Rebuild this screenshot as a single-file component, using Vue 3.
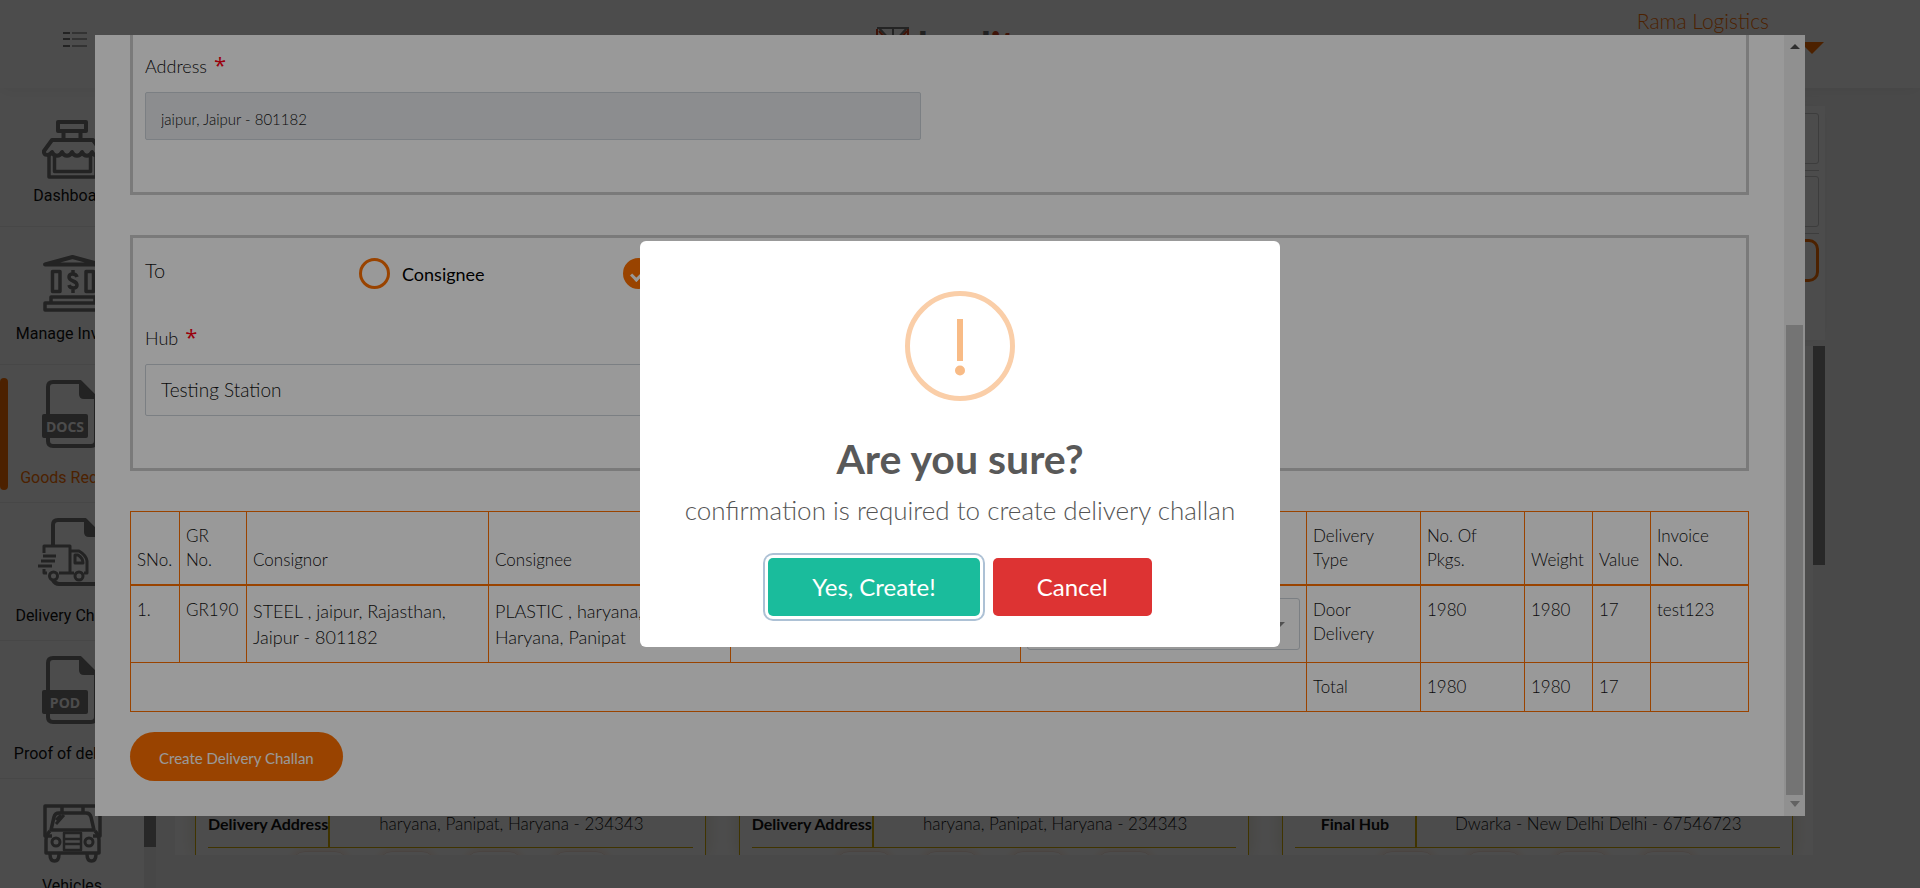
<script setup>
import { ref } from 'vue'

const menu = [
  { label: 'Dashboard', icon: 'shop' },
  { label: 'Manage Invoice', icon: 'bank' },
  { label: 'Goods Receipt', icon: 'docs', active: true, tall: true },
  { label: 'Delivery Challan', icon: 'truck', tall: true },
  { label: 'Proof of delivery', icon: 'pod', tall: true },
  { label: 'Vehicles', icon: 'vehicle' }
]

const cards = [
  { name: 'Delivery Address', value: 'haryana, Panipat, Haryana - 234343' },
  { name: 'Delivery Address', value: 'haryana, Panipat, Haryana - 234343' },
  { name: 'Final Hub', value: 'Dwarka - New Delhi Delhi - 67546723' }
]

const destination = ref('hub')
</script>

<template>
  <div class="page">
    <header class="topbar">
      <button class="toggle" aria-label="Toggle menu">
        <svg width="24" height="16" viewBox="0 0 24 16">
          <path d="M0 1h7M0 7h7M0 14h7" stroke="#777" stroke-width="2" />
          <path d="M9 1h15M9 7h15M9 14h15" stroke="#aaa" stroke-width="2" />
        </svg>
      </button>
      <div class="logo">
        <svg width="34" height="34" viewBox="0 0 34 34" fill="none" stroke-width="3">
          <path d="M1 2h32M17 2v30M3 2l11 12M31 2L20 14" stroke="#7a7a7a" stroke-width="2" />
          <path d="M1 3v29h31V3M3 5l9 10M31 5l-9 10" stroke="#d2451e" stroke-width="2" />
        </svg>
        <span>load<b>it</b></span>
      </div>
      <div class="account">
        <span>Rama Logistics</span>
        <svg class="drop" width="24" height="12" viewBox="0 0 24 12"><path d="M0 0h24L12 12z" fill="#ff7100" /></svg>
      </div>
    </header>

    <div class="body">
      <nav class="sidebar">
        <a v-for="item in menu" :key="item.label" href="#" class="item" :class="{ active: item.active, tall: item.tall }">
          <svg class="glyph" viewBox="22 0 100 92" fill="none" stroke="#757575" stroke-width="4" stroke-linejoin="round">
            <template v-if="item.icon === 'shop'">
              <path d="M58 33h28v9H58zM63.500 43v6M80.500 43v6" />
              <path d="M52 51h41l8 11c0 5-7 6-9 1-2 5-8 5-10 0-2 5-8 5-10 0-2 5-8 5-10 0-2 5-8 5-10 0-2 4-9 4-8-1z" />
              <path d="M49 66v22h47V66M54.500 66v16.500h36V66" stroke-width="3.500" />
            </template>
            <template v-else-if="item.icon === 'bank'">
              <path d="M45 37.500h55L72.500 30z" />
              <path d="M52.500 44.500h7.500v20h-7.500zM86 44.500h7.500v20H86z" stroke-width="3.500" />
              <path d="M77 50c-1-4-8-4-8 0 0 5 8 3 8 8 0 4-7 4-8 0M73 43v4M73 61v5" stroke-width="3.500" />
              <path d="M51 76v-6h44v6M45 76h56v7H45z" stroke-width="3.500" />
            </template>
            <template v-else-if="item.icon === 'docs' || item.icon === 'pod'">
              <path d="M80 17H53q-5 0-5 5v54q0 5 5 5h38q5 0 5-5V33z" />
              <path d="M80 16v13q0 4 4 4h12z" fill="#757575" stroke-width="2" />
              <rect x="43" y="50" width="44" height="22" rx="1" fill="#757575" stroke-width="2" />
              <text x="65" y="66.500" class="badge">{{ item.icon.toUpperCase() }}</text>
            </template>
            <template v-else-if="item.icon === 'truck'">
              <path d="M53 42V22q0-5 5-5h27l16 16v43q0 5-5 5H59q-4 0-6-4" />
              <path d="M85 16v13q0 4 4 4h12z" fill="#757575" stroke-width="2" />
              <path d="M44 50v-7h26v27H59M44 66v4h3M70 48h9q7 4 8 10v12h-3M70 70h4M38 63h14M41 58h14M43 53h13" stroke-width="3" />
              <path d="M75 52h3q5 3 5 8h-8z" stroke-width="3" />
              <circle cx="53.500" cy="73" r="4" stroke-width="3" />
              <circle cx="79" cy="73" r="4" stroke-width="3" />
            </template>
            <template v-else>
              <path d="M52 57h-7V27h55v30h-7M62 28v5M83 28v5" stroke-width="3.500" />
              <path d="M51 51l3-13q1-4 5-4h27q4 0 5 4l3 13z" stroke-width="3.500" />
              <path d="M50 52q-4 4-4 9v13h53V61q0-5-4-9" stroke-width="3.500" />
              <path d="M56 45l8-9M56 41l5-5" stroke-width="3" />
              <circle cx="56" cy="63" r="4" stroke-width="3" />
              <circle cx="89" cy="63" r="4" stroke-width="3" />
              <path d="M64 54h17v17H64zM64 60h17M64 65h17" stroke-width="2.500" />
              <path d="M50 75q0 7 4.500 7t4.500-7M87 75q0 7 4.500 7t4.500-7" stroke-width="3.500" />
            </template>
          </svg>
          <span>{{ item.label }}</span>
        </a>
      </nav>
      <div class="rail"><div class="rail-thumb side-thumb"></div></div>

      <main class="main">
        <section class="filters">
          <div class="filter-row"><input class="field" aria-label="Search" /></div>
          <div class="filter-row"><input class="field" aria-label="Filter" /></div>
          <button class="apply" aria-label="Apply"></button>
        </section>
        <section class="listing">
          <div class="cards">
            <article v-for="(card, i) in cards" :key="i" class="card">
              <div class="card-row">
                <strong>{{ card.name }}</strong>
                <span>{{ card.value }}</span>
              </div>
              <div class="chips"><i v-for="n in 4" :key="n"></i></div>
            </article>
          </div>
          <div class="rail list-rail"><div class="rail-thumb list-thumb"></div></div>
        </section>
      </main>
    </div>
  </div>

  <div class="shade dim">
    <div class="dialog">
      <form class="sheet" @submit.prevent>
        <section class="box box-from">
          <label for="address" class="caption">Address <em>*</em></label>
          <input id="address" class="control locked" value="jaipur, Jaipur - 801182" readonly />
        </section>

        <section class="box box-to">
          <div class="choices">
            <span class="to">To</span>
            <label class="choice"><input v-model="destination" type="radio" name="destination" value="consignee" /><span>Consignee</span></label>
            <label class="choice"><input v-model="destination" type="radio" name="destination" value="hub" /><span>Hub</span></label>
          </div>
          <label for="hub" class="caption">Hub <em>*</em></label>
          <select id="hub" class="control"><option>Testing Station</option></select>
        </section>

        <table class="grid">
          <colgroup>
            <col class="c-sno" /><col class="c-gr" /><col class="c-party" /><col class="c-party" /><col class="c-wide" /><col />
            <col class="c-type" /><col class="c-pkgs" /><col class="c-weight" /><col class="c-value" /><col class="c-invoice" />
          </colgroup>
          <thead>
            <tr>
              <th>SNo.</th><th>GR<br />No.</th><th>Consignor</th><th>Consignee</th><th></th><th></th>
              <th>Delivery<br />Type</th><th>No. Of<br />Pkgs.</th><th>Weight</th><th>Value</th><th>Invoice<br />No.</th>
            </tr>
          </thead>
          <tbody>
            <tr>
              <td>1.</td>
              <td>GR190</td>
              <td class="party">STEEL , jaipur, Rajasthan,<br />Jaipur - 801182</td>
              <td class="party">PLASTIC , haryana,<br />Haryana, Panipat</td>
              <td></td>
              <td><div class="pick"><select aria-label="Option"><option></option></select></div></td>
              <td>Door<br />Delivery</td>
              <td>1980</td>
              <td>1980</td>
              <td>17</td>
              <td>test123</td>
            </tr>
            <tr>
              <td colspan="6"></td>
              <td>Total</td>
              <td>1980</td>
              <td>1980</td>
              <td>17</td>
              <td></td>
            </tr>
          </tbody>
        </table>

        <button class="create" type="submit">Create Delivery Challan</button>
      </form>
      <div class="scroll">
        <svg width="10" height="6" viewBox="0 0 10 6"><path d="M0 5l5-5 5 5z" fill="#505050" /></svg>
        <div class="scroll-thumb"></div>
        <svg width="10" height="6" viewBox="0 0 10 6"><path d="M0 0h10L5 6z" fill="#a3a3a3" /></svg>
      </div>
    </div>
  </div>

  <div class="shade veil">
    <div class="alert" role="alertdialog" aria-labelledby="alert-title" aria-describedby="alert-text">
      <svg class="warn" width="110" height="110" viewBox="0 0 110 110">
        <circle cx="55" cy="55" r="52.500" fill="none" stroke="#facea8" stroke-width="5" />
        <path d="M52 28h6v42h-6z" fill="#f8bb86" />
        <circle cx="55" cy="79.500" r="5" fill="#f8bb86" />
      </svg>
      <h2 id="alert-title">Are you sure?</h2>
      <p id="alert-text">confirmation is required to create delivery challan</p>
      <div class="actions">
        <button class="yes">Yes, Create!</button>
        <button class="no">Cancel</button>
      </div>
    </div>
  </div>
</template>

<style>
body {
  background: #f6f6f6;
  overflow: hidden;
}
</style>

<style scoped>
* {
  box-sizing: border-box;
}
.page,
.shade {
  font-family: Lato, "Open Sans", sans-serif;
  font-weight: 300;
  font-size: 17px;
  line-height: 24px;
  color: #111;
}
button,
input,
select {
  font: inherit;
  color: inherit;
  margin: 0;
}
.page {
  height: 100vh;
  display: flex;
  flex-direction: column;
  overflow: hidden;
}
.topbar {
  flex: none;
  position: relative;
  z-index: 1;
  height: 88px;
  padding: 0 96px 0 63px;
  display: flex;
  justify-content: space-between;
  align-items: flex-start;
  background: #fff;
  box-shadow: 0 2px 16px rgba(0, 0, 0, 0.06);
}
.toggle {
  margin-top: 32px;
  padding: 0;
  border: 0;
  background: none;
  line-height: 0;
}
.logo {
  position: absolute;
  left: calc(50% - 84px);
  top: 26px;
  display: flex;
  gap: 8px;
  font-size: 38px;
  line-height: 36px;
  font-weight: 900;
  color: #6e6e6e;
}
.logo b {
  color: #d2451e;
}
.account {
  display: flex;
  flex-direction: column;
  align-items: flex-end;
  padding-top: 9px;
  color: #ff7100;
  font-size: 21px;
}
.account span {
  margin-right: 55px;
}
.drop {
  margin-top: 9px;
}
.body {
  flex: 1;
  min-height: 0;
  display: flex;
}
.sidebar {
  width: 144px;
  flex: none;
  background: #fff;
  overflow: hidden;
  padding-top: 1px;
}
.item {
  position: relative;
  display: flex;
  flex-direction: column;
  align-items: center;
  height: 138px;
  border-bottom: 1px solid #eee;
  color: #111;
  text-decoration: none;
  white-space: nowrap;
  font-family: Roboto, sans-serif;
  font-weight: 400;
  font-size: 16px;
  line-height: 20px;
}
.glyph {
  width: 100px;
  height: 92px;
  flex: none;
  margin-bottom: 5px;
}
.tall .glyph {
  margin-bottom: 11px;
}
.badge {
  font: 700 14px "Open Sans", sans-serif;
  fill: #fff;
  stroke: none;
  text-anchor: middle;
}
.active {
  color: #ff7100;
}
.active::before {
  content: "";
  position: absolute;
  left: 0;
  top: 13px;
  width: 8px;
  height: 112px;
  border-radius: 4px;
  background: #ff7100;
}
.rail {
  width: 12px;
  flex: none;
  background: #eee;
}
.list-rail {
  background: #f6f6f6;
}
.rail-thumb {
  background: #888;
}
.side-thumb {
  height: calc(100% - 41px);
}
.list-thumb {
  height: 43%;
}
.main {
  flex: 1;
  min-width: 0;
  display: flex;
  flex-direction: column;
  gap: 6px;
  padding: 18px 95px 33px 19px;
}
.filters {
  height: 234px;
  flex: none;
  padding: 7px 6px;
  background: #fff;
  box-shadow: 0 0 16px rgba(0, 0, 0, 0.04);
}
.filter-row {
  padding-bottom: 6px;
  margin-bottom: 5px;
  border-bottom: 1px solid #ccc;
}
.field {
  display: block;
  width: 100%;
  height: 51px;
  border: 1px solid #ccc;
  border-radius: 3px;
  background: #fff;
}
.apply {
  width: 100%;
  height: 43px;
  border: 3px solid #ff7100;
  border-radius: 10px;
  background: #fff;
}
.listing {
  flex: 1;
  min-height: 0;
  display: flex;
}
.cards {
  flex: 1;
  display: flex;
  gap: 33px;
  padding: 0 20px;
  background: #fff;
  overflow: hidden;
}
.card {
  flex: 1;
  display: flex;
  flex-direction: column;
  justify-content: flex-end;
  padding: 0 12px;
  border: solid #d8ad00;
  border-width: 0 1px;
  box-shadow: 0 0 16px rgba(120, 100, 0, 0.2);
}
.card-row {
  display: grid;
  grid-template-columns: 1fr 3fr;
  border-bottom: 1px solid #d8ad00;
  text-align: center;
}
.card-row > * {
  padding: 0 0 11px;
  white-space: nowrap;
}
.card-row strong {
  border-right: 2px solid #d8ad00;
  font-weight: 700;
  font-size: 16px;
}
.chips {
  height: 7px;
  padding-top: 3px;
  overflow: hidden;
  display: flex;
  justify-content: center;
  gap: 29px;
}
.chips i {
  width: 58px;
  height: 40px;
  border-radius: 14px;
  border: 1px solid #f8e4da;
  box-shadow: 0 0 8px rgba(255, 113, 0, 0.2);
}

.shade {
  position: fixed;
  inset: 0;
}
.dim {
  z-index: 5;
  background: rgba(0, 0, 0, 0.5);
  padding: 35px 115px 72px 95px;
}
.veil {
  z-index: 9;
  background: rgba(0, 0, 0, 0.4);
  display: flex;
  align-items: center;
  justify-content: center;
}
.dialog {
  height: 100%;
  display: flex;
  background: #fff;
  overflow: hidden;
}
.sheet {
  flex: 1;
  min-width: 0;
  padding: 0 35px 35px;
}
.scroll {
  width: 21px;
  flex: none;
  padding: 9px 2px;
  display: flex;
  flex-direction: column;
  align-items: center;
  background: #f1f1f1;
}
.scroll-thumb {
  width: 100%;
  height: 470px;
  margin: auto 0 6px;
  background: #c1c1c1;
}
.box {
  border: 3px solid #ccc;
  padding: 0 12px;
}
.box-from {
  border-top: 0;
  padding-top: 19px;
  padding-bottom: 52px;
  margin-bottom: 40px;
}
.box-to {
  padding-top: 20px;
  padding-bottom: 52px;
  margin-bottom: 40px;
}
.caption {
  display: block;
  font-size: 18px;
}
.caption em {
  color: #ff0014;
  font-family: "Open Sans", sans-serif;
  font-style: normal;
  font-weight: 400;
  font-size: 22px;
  line-height: 20px;
  margin-left: 2px;
}
.control {
  display: block;
  appearance: none;
  width: calc(50% - 19px);
  height: 52px;
  margin-top: 14px;
  padding: 0 15px;
  border: 1px solid #ced4da;
  border-radius: 2px;
  background: #fff;
  font-size: 19px;
}
.locked {
  height: 48px;
  padding-top: 5px;
  background: #e9ecef;
  font-size: 15px;
}
.choices {
  display: flex;
  margin-bottom: 37px;
}
.to {
  width: 214px;
  font-size: 20px;
}
.choice {
  display: flex;
  align-items: center;
  gap: 12px;
  width: 264px;
  color: #000;
  font-weight: 400;
  font-size: 18px;
}
.choice input {
  appearance: none;
  width: 31px;
  height: 31px;
  border: 3px solid #ff7100;
  border-radius: 50%;
  display: grid;
  place-items: center;
}
.choice input:checked {
  background: #ff7100;
}
.choice input:checked::before {
  content: "";
  width: 12px;
  height: 6px;
  border: solid #fff;
  border-width: 0 0 3px 3px;
  transform: rotate(-45deg);
}
.grid {
  width: 100%;
  table-layout: fixed;
  border-collapse: collapse;
}
.grid th,
.grid td {
  padding: 12px 6px;
  border: 1px solid #ff7100;
  text-align: left;
  vertical-align: top;
  font-weight: 300;
}
.grid th {
  vertical-align: bottom;
  border-bottom-width: 2px;
}
.grid .party {
  font-size: 18px;
  line-height: 26px;
}
.c-sno { width: 49px; }
.c-gr { width: 67px; }
.c-party { width: 242px; }
.c-wide { width: 290px; }
.c-type { width: 114px; }
.c-pkgs { width: 104px; }
.c-weight { width: 68px; }
.c-value { width: 58px; }
.c-invoice { width: 98px; }
.pick {
  position: relative;
}
.pick::after {
  content: "";
  position: absolute;
  right: 15px;
  top: 24px;
  border: 5px solid transparent;
  border-top-color: #888;
  border-bottom: 0;
}
.pick select {
  display: block;
  appearance: none;
  width: 100%;
  height: 52px;
  border: 1px solid #ced4da;
  border-radius: 3px;
  background: #fff;
}
.create {
  display: block;
  height: 49px;
  margin-top: 20px;
  padding: 2px 29px 0;
  border: 0;
  border-radius: 25px;
  background: #ff7100;
  color: #fff;
  font-size: 15px;
  font-weight: 400;
}
.alert {
  width: 640px;
  padding: 50px 20px 31px;
  border-radius: 6px;
  background: #fff;
  display: flex;
  flex-direction: column;
  align-items: center;
}
.alert h2 {
  margin: 32px 0 0;
  font-size: 41px;
  line-height: 52px;
  font-weight: 700;
  color: #595959;
}
.alert p {
  margin: 8px 0 0;
  font-size: 26px;
  line-height: 34px;
  color: #545454;
}
.actions {
  display: flex;
  gap: 13px;
  margin-top: 31px;
}
.actions button {
  height: 58px;
  border: 0;
  border-radius: 5px;
  padding: 0 44px;
  color: #fff;
  font-size: 24px;
  font-weight: 400;
}
.actions .yes {
  background: #1abc9c;
  box-shadow: 0 0 0 3px #fff, 0 0 0 5px #adc1d5;
}
.actions .no {
  background: #dd3333;
}
</style>
